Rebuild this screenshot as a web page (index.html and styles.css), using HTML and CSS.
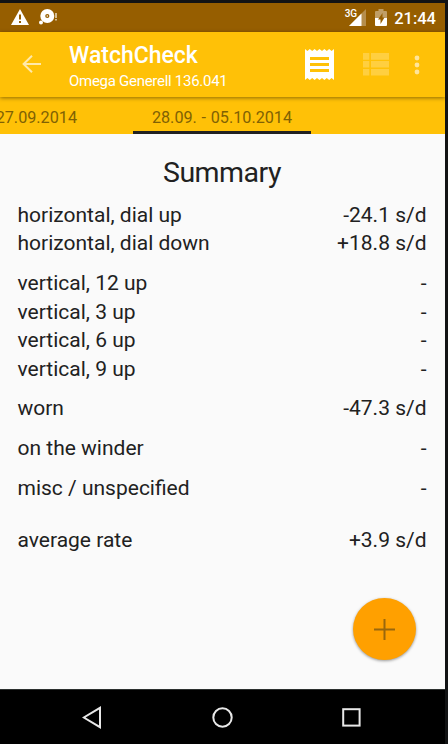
FILE: index.html
```html
<!DOCTYPE html>
<html lang="en">
<head>
  <meta charset="UTF-8" />
  <meta name="viewport" content="width=device-width, initial-scale=1.0" />
  <title>WatchCheck</title>
  <link rel="stylesheet" href="styles.css">
</head>
<body>

<div class="phone">
  <div class="status-bar">
    <svg class="warning" width="18" height="16" viewBox="0 0 18 16">
      <path d="M9 0L18 16H0Z" fill="#fff"/>
      <path d="M8 5.5h2v5H8zM8 12h2v2H8z" fill="#965e00"/>
    </svg>
    <svg class="disc" width="19" height="17" viewBox="0 0 19 17">
      <circle cx="8.3" cy="7" r="7" fill="#fff"/>
      <circle cx="8.3" cy="7" r="2.1" fill="#965e00"/>
      <circle cx="8.3" cy="7" r=".8" fill="#fff"/>
      <circle cx="2" cy="13.6" r="2" fill="#fff"/>
      <path d="M16.2 4h1.6v5h-1.6zM16.2 10h1.6v1.6h-1.6z" fill="#e6d5b8"/>
    </svg>
    <span class="network">3G</span>
    <svg class="signal" width="17" height="17" viewBox="0 0 17 17">
      <path d="M17 0V17H0Z" fill="#fff" opacity=".3"/>
      <path d="M12.5 4.5V17H0Z" fill="#fff"/>
    </svg>
    <svg class="battery" width="12" height="17" viewBox="0 0 12 17">
      <path d="M3.5 0h5v2H11q1 0 1 1v6H0V3q0-1 1-1h2.500z" fill="#fff" opacity=".4"/>
      <path d="M0 9h12v7q0 1-1 1H1q-1 0-1-1z" fill="#fff"/>
      <path d="M7.500 4L3 10.500h2.500V15L9.500 8.500H7.500z" fill="#965e00"/>
    </svg>
    <span class="clock">21:44</span>
  </div>

  <div class="app-bar">
    <svg class="back" width="20" height="18" viewBox="0 0 20 18">
      <path d="M19 9H1.500M10 .8L1.600 9L10 17.200" fill="none" stroke="#ffe9ab" stroke-width="2"/>
    </svg>
    <div class="titles">
      <h1>WatchCheck</h1>
      <p>Omega Generell 136.041</p>
    </div>
    <svg class="receipt" width="29" height="31" viewBox="0 0 29 31">
      <path d="M0 0l2.400 2 2.400-2 2.400 2 2.400-2 2.400 2 2.500-2 2.500 2 2.400-2 2.400 2 2.400-2 2.400 2L29 0v31l-2.400-2-2.400 2-2.400-2-2.400 2-2.400-2-2.500 2-2.500-2-2.400 2-2.400-2-2.400 2-2.400-2L0 31z" fill="#fff"/>
      <path d="M5 8h19v3H5zM5 14h19v3H5zM5 20h19v3H5z" fill="#ffc107"/>
    </svg>
    <svg class="list" width="26" height="23" viewBox="0 0 26 23">
      <path d="M0 0h6.300v6.700H0zM8 0h18v6.700H8zM0 8h6.300v6.500H0zM8 8h18v6.500H8zM0 16h6.300v6.500H0zM8 16h18v6.500H8z" fill="#ffcf40"/>
    </svg>
    <svg class="more" width="6" height="20" viewBox="0 0 6 20">
      <g fill="#ffe59b">
        <circle cx="3" cy="3" r="2.400"/>
        <circle cx="3" cy="10" r="2.400"/>
        <circle cx="3" cy="17" r="2.400"/>
      </g>
    </svg>
  </div>

  <div class="tabs">
    <div class="tab previous">27.09.2014</div>
    <div class="tab active">28.09. - 05.10.2014</div>
  </div>

  <div class="summary">
    <h2>Summary</h2>
    <div class="group">
      <div class="row"><span>horizontal, dial up</span><span>-24.1 s/d</span></div>
      <div class="row"><span>horizontal, dial down</span><span>+18.8 s/d</span></div>
    </div>
    <div class="group">
      <div class="row"><span>vertical, 12 up</span><span>-</span></div>
      <div class="row"><span>vertical, 3 up</span><span>-</span></div>
      <div class="row"><span>vertical, 6 up</span><span>-</span></div>
      <div class="row"><span>vertical, 9 up</span><span>-</span></div>
    </div>
    <div class="group">
      <div class="row"><span>worn</span><span>-47.3 s/d</span></div>
    </div>
    <div class="group">
      <div class="row"><span>on the winder</span><span>-</span></div>
    </div>
    <div class="group">
      <div class="row"><span>misc / unspecified</span><span>-</span></div>
    </div>
    <div class="group average">
      <div class="row"><span>average rate</span><span>+3.9 s/d</span></div>
    </div>
    <button class="add" aria-label="Add">
      <svg width="21" height="21" viewBox="0 0 21 21">
        <path d="M0 10.500H21M10.500 0V21" stroke="#99670d" stroke-width="2"/>
      </svg>
    </button>
  </div>

  <div class="nav-bar">
    <svg width="20" height="23" viewBox="0 0 20 23">
      <path d="M18 1.800V21.200L1.800 11.500Z" fill="none" stroke="#e8e8e8" stroke-width="2"/>
    </svg>
    <svg width="21" height="21" viewBox="0 0 21 21">
      <circle cx="10.500" cy="10.500" r="9.200" fill="none" stroke="#e8e8e8" stroke-width="2"/>
    </svg>
    <svg width="19" height="19" viewBox="0 0 19 19">
      <rect x="1.200" y="1.200" width="16.400" height="16.400" fill="none" stroke="#e8e8e8" stroke-width="2"/>
    </svg>
  </div>
</div>

</body>
</html>
```

FILE: styles.css
```css
:root {
  --status: #965e00;
  --amber: #ffc107;
  --text: #212121;
  --accent: #ffa000;
}

* {
  box-sizing: border-box;
}

body {
  margin: 0;
  background: #121314;
  font-family: Roboto, sans-serif;
  color: var(--text);
}

.phone {
  width: 445px;
  height: 744px;
  padding-top: 3px;
  display: flex;
  flex-direction: column;
  overflow: hidden;
}

svg {
  display: block;
  flex-shrink: 0;
}

h1, h2, p {
  margin: 0;
  font-weight: 400;
}

.status-bar {
  height: 29px;
  background: var(--status);
  color: #fff;
  display: flex;
  align-items: center;
  padding: 0 9px 0 11px;
}

.warning {
  margin-top: -1px;
}

.disc {
  margin-left: 10px;
}

.network {
  margin-left: auto;
  margin-top: -7px;
  font-size: 10px;
  font-weight: 500;
  line-height: 12px;
}

.signal {
  margin-left: -8px;
}

.battery {
  margin: 0 7px 0 9px;
}

.clock {
  font-size: 16.5px;
  font-weight: 500;
  margin-top: 2px;
}

.app-bar {
  height: 65px;
  background: var(--amber);
  color: #fff;
  display: flex;
  align-items: center;
  padding: 0 25px 0 22px;
  position: relative;
  box-shadow: 0 1px 4px rgba(0,0,0,0.45);
}

.back {
  margin-top: -1px;
}

.titles {
  margin-left: 27px;
  margin-right: auto;
  padding-top: 5px;
}

.titles h1 {
  font-size: 23px;
  font-weight: 500;
  line-height: 27px;
}

.titles p {
  font-size: 15px;
  line-height: 24px;
  letter-spacing: -0.28px;
}

.list {
  margin: 0 25px 0 29px;
}

.tabs {
  height: 37px;
  background: var(--amber);
  color: #806104;
  font-size: 16.2px;
  word-spacing: 0.7px;
  display: flex;
}

.tab {
  line-height: 41px;
  height: 37px;
  white-space: nowrap;
}

.previous {
  width: 133px;
  padding-right: 56px;
  display: flex;
  justify-content: flex-end;
}

.active {
  width: 178px;
  text-align: center;
  border-bottom: 3px solid var(--text);
}

.summary {
  flex: 1;
  background: #fafafa;
  padding: 20px 18.5px 0 17.5px;
  position: relative;
}

h2 {
  font-size: 28.5px;
  letter-spacing: -0.5px;
  line-height: 38px;
  text-align: center;
  margin-bottom: 9px;
}

.group {
  margin-bottom: 11.5px;
}

.average {
  margin-top: 23.4px;
}

.row {
  display: flex;
  justify-content: space-between;
  font-size: 21px;
  line-height: 28.4px;
}

/* floats over the list */
.add {
  position: absolute;
  right: 29px;
  bottom: 29px;
  width: 63px;
  height: 62px;
  padding: 0;
  border: none;
  border-radius: 50%;
  background: var(--accent);
  box-shadow: 0 1px 3px rgba(0,0,0,0.4);
  display: flex;
  align-items: center;
  justify-content: center;
}

.nav-bar {
  height: 55px;
  background: #000;
  border-top: 1px solid #2c302f;
  display: flex;
  justify-content: space-between;
  align-items: center;
  padding: 1px 84px 0 82px;
}
```
